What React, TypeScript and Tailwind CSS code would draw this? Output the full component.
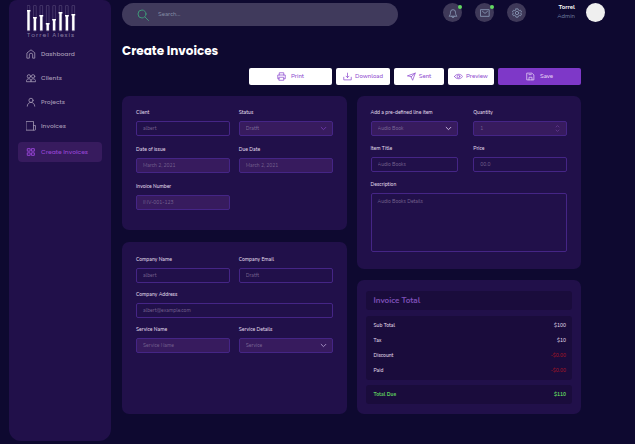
import { useId } from "react";
import type { ReactNode } from "react";

const stroke = {
  fill: "none",
  stroke: "currentColor",
  strokeLinecap: "round" as const,
  strokeLinejoin: "round" as const,
};

function Icon({ className, width = 1.8, children }: { className: string; width?: number; children: ReactNode }) {
  return (
    <svg viewBox="0 0 24 24" className={"shrink-0 " + className} strokeWidth={width} {...stroke} aria-hidden="true">
      {children}
    </svg>
  );
}

const labelText = "block text-[5px] font-medium leading-[8px] text-[#e2dcec]";
const box = "block w-full rounded-[2px] border border-[#452586] px-[6px] text-[5px] text-[#7d6a98] placeholder:text-[#76628f] outline-none";

function Field({ label, placeholder, filled = false, className = "" }: { label: string; placeholder: string; filled?: boolean; className?: string }) {
  const id = useId();
  return (
    <div className={"flex min-w-0 flex-col gap-[4px] " + className}>
      <label htmlFor={id} className={labelText}>{label}</label>
      <input id={id} type="text" placeholder={placeholder} className={box + " h-[15px] " + (filled ? "bg-[#371b5e]" : "bg-transparent")} />
    </div>
  );
}

function SelectField({ label, value, chevron }: { label: string; value: string; chevron: string }) {
  const id = useId();
  return (
    <div className="flex min-w-0 flex-col gap-[4px]">
      <label htmlFor={id} className={labelText}>{label}</label>
      <div className="relative">
        <select id={id} className={box + " h-[15px] appearance-none bg-[#371b5e]"}>
          <option>{value}</option>
        </select>
        <Icon className={"pointer-events-none absolute right-[6px] top-[4px] size-[7px] " + chevron} width={3.4}>
          <path d="M4 8l8 8 8-8" />
        </Icon>
      </div>
    </div>
  );
}

const bars = [5, 12, 10, 18, 14, 7, 10, 9];

function Logo() {
  return (
    <div className="ml-[9px] w-[50px]">
      <svg viewBox="0 0 50 27" className="block h-[27px] w-[50px]" aria-hidden="true">
        {bars.map((top, i) => {
          const x = 1.5 + i * 6.4;
          return (
            <g key={i}>
              <rect x={x - 1.3} y={0.4} width={2.6} height={25.6} rx={0.5} fill="none" stroke="#8d83a6" strokeOpacity={0.55} strokeWidth={0.6} />
              <rect x={x - 1.2} y={top} width={2.4} height={25.5 - top} fill="#fff" />
              <rect x={x - 1.9} y={top} width={3.8} height={1.5} fill="#fff" />
            </g>
          );
        })}
      </svg>
      <p className="whitespace-nowrap font-['Poppins','Inter',sans-serif] text-[6px] leading-[6px] tracking-[1px] text-[#877da0]">Torrel Alexis</p>
    </div>
  );
}

const navItems: { label: string; icon: ReactNode }[] = [
  { label: "Dashboard", icon: <path d="M3 9l9-7 9 7v13h-5v-8a4 4 0 0 0-8 0v8H3z" /> },
  {
    label: "Clients",
    icon: (
      <>
        <circle cx="7" cy="8" r="4" />
        <circle cx="17" cy="8" r="4" />
        <path d="M1 20c0-4 2-6 6-6s5 2 5 6zM12 20c0-4 1-6 5-6s6 2 6 6z" />
      </>
    ),
  },
  {
    label: "Projects",
    icon: (
      <>
        <circle cx="12" cy="8" r="5" />
        <path d="M3 22c0-5 4-9 9-9s9 4 9 9" />
      </>
    ),
  },
  { label: "Invoices", icon: <path d="M1 1h17v21H1zM18 11h5v9a2 2 0 0 1-2 2h-3" /> },
];

function Sidebar() {
  return (
    <aside className="flex w-[102px] shrink-0 flex-col rounded-b-[12px] rounded-t-[8px] bg-[#21104a] px-[9px] pt-[5px]">
      <Logo />
      <nav className="mt-[6px] flex flex-col gap-[4px] font-['Poppins','Inter',sans-serif] text-[6px] font-medium text-[#a196b2]">
        {navItems.map((item) => (
          <a key={item.label} href="#" className="flex h-[20px] items-center gap-[5px] pl-[8px]">
            <Icon className="size-[10px]" width={2}>{item.icon}</Icon>
            {item.label}
          </a>
        ))}
        <a href="#" aria-current="page" className="mt-[2px] flex h-[20px] items-center gap-[5px] rounded-[4px] bg-[#371b5e] pl-[8px] text-[#9243cf]">
          <Icon className="size-[10px]" width={2.4}>
            <path d="M4 4h6v6H4zM14 4h6v6h-6zM4 14h6v6H4zM14 14h6v6h-6z" />
          </Icon>
          Create Invoices
        </a>
      </nav>
    </aside>
  );
}

function RoundButton({ label, dot = false, children }: { label: string; dot?: boolean; children: ReactNode }) {
  return (
    <button type="button" aria-label={label} className="relative flex size-[19px] items-center justify-center rounded-full bg-[#3f3959] text-[#8c9bb8]">
      <Icon className="size-[10px]" width={2}>{children}</Icon>
      {dot && <span className="absolute right-0 top-[2px] size-[4px] rounded-full bg-[#62d862]" />}
    </button>
  );
}

function Header() {
  return (
    <header className="flex items-start pt-[3px]">
      <div className="flex h-[23px] flex-1 items-center gap-[9px] rounded-full bg-[#403a5c] pl-[15px]">
        <Icon className="size-[12px] text-[#3f9678]" width={2}>
          <circle cx="10" cy="10" r="8" />
          <path d="M16 16l7 7" />
        </Icon>
        <input type="search" aria-label="Search" placeholder="Search..." className="min-w-0 flex-1 bg-transparent text-[6px] text-[#8f98ae] outline-none placeholder:text-[#8790a8]" />
      </div>
      <div className="ml-[45px] flex gap-[13px]">
        <RoundButton label="Notifications" dot>
          <path d="M3 19c2-2 3-4 3-9a6 6 0 0 1 12 0c0 5 1 7 3 9zM9 20a3 3 0 0 0 6 0" />
        </RoundButton>
        <RoundButton label="Messages" dot>
          <path d="M2 4h20v16H2zM6 8l6 5 6-5" />
        </RoundButton>
        <RoundButton label="Settings">
          <path d="M9.5 2h5l.8 3 2.2 1.2 3-.8 2.4 4.2-2.2 2.2v.4l2.2 2.2-2.4 4.2-3-.8-2.2 1.2-.8 3h-5l-.8-3-2.2-1.2-3 .8-2.4-4.2 2.2-2.2v-.4L1.1 9.6l2.4-4.2 3 .8L8.7 5z" />
          <circle cx="12" cy="12" r="4" />
        </RoundButton>
      </div>
      <div className="ml-[27px] w-[22px] whitespace-nowrap">
        <p className="flex justify-end text-[6px] font-bold leading-[9px] text-white">Torrel</p>
        <p className="flex justify-end text-[6px] leading-[9px] text-[#7180a3]">Admin</p>
      </div>
      <div className="ml-[11px] size-[19px] rounded-full bg-[#efefef]" />
    </header>
  );
}

function ActionButton({ label, className, gap = "gap-[3px]", children }: { label: string; className: string; gap?: string; children: ReactNode }) {
  return (
    <button type="button" className={"flex h-[17px] items-center justify-center rounded-[2px] text-[6px] font-medium " + gap + " " + className}>
      <Icon className="size-[9px]" width={2}>{children}</Icon>
      {label}
    </button>
  );
}

function Actions() {
  const light = "bg-white text-[#8f4dd0] ";
  return (
    <div className="mt-[9px] flex justify-end gap-[4px]">
      <ActionButton label="Print" className={light + "w-[83px]"} gap="gap-[5px]">
        <path d="M6 8V2h12v6M6 18H2V8h20v10h-4M6 14h12v8H6z" />
      </ActionButton>
      <ActionButton label="Download" className={light + "w-[54px]"}>
        <path d="M12 3v12M8 11l4 4 4-4M2 14v7h20v-7" />
      </ActionButton>
      <ActionButton label="Sent" className={light + "w-[50px]"}>
        <path d="M2 10L22 3l-7 19-4-9zM11 13L22 3" />
      </ActionButton>
      <ActionButton label="Preview" className={light + "w-[46px]"}>
        <path d="M1 12c5-8 17-8 22 0-5 8-17 8-22 0z" />
        <circle cx="12" cy="12" r="3.5" />
      </ActionButton>
      <ActionButton label="Save" className="w-[83px] bg-[#7e38c8] text-[#e6d6f5]" gap="gap-[5px]">
        <path d="M3 3h13l5 5v13H3zM8 21v-7h8v7M8 7h6" />
      </ActionButton>
    </div>
  );
}

const card = "rounded-[7px] bg-[#21104a]";
const rows = [
  { name: "Sub Total", amount: "$100", tone: "text-[#e2dcec]" },
  { name: "Tax", amount: "$10", tone: "text-[#e2dcec]" },
  { name: "Discount", amount: "-$0.00", tone: "text-[#a81524]" },
  { name: "Paid", amount: "-$0.00", tone: "text-[#a81524]" },
];

function InvoiceTotal() {
  return (
    <section className={card + " px-[9px] pb-[10px] pt-[11px] text-[5px] font-medium"}>
      <h2 className="flex h-[19px] items-center rounded-[3px] bg-[#1a0c3c] px-[8px] text-[8px] font-bold text-[#7d4fb8]">Invoice Total</h2>
      <div className="mt-[6px] rounded-[3px] bg-[#1a0c3c] py-[2px] pl-[8px] pr-[6px]">
        <table className="w-full">
          <tbody>
            {rows.map((row) => (
              <tr key={row.name} className="h-[15px]">
                <th scope="row" className="p-0 text-left align-middle font-medium leading-[8px] text-[#e2dcec]">{row.name}</th>
                <td className={"p-0 text-right align-middle leading-[8px] " + row.tone}>{row.amount}</td>
              </tr>
            ))}
          </tbody>
        </table>
      </div>
      <p className="mt-[5px] flex h-[19px] items-center justify-between rounded-[3px] bg-[#1a0c3c] pl-[8px] pr-[6px] font-bold text-[#5fce5f]">
        <span>Total Due</span>
        <span>$110</span>
      </p>
    </section>
  );
}

export default function App() {
  const descriptionId = useId();
  const quantityId = useId();
  return (
    <div className="flex min-h-screen bg-[#0e0930] pb-[3px] pl-[9px] font-['Nunito','Lato',sans-serif]">
      <Sidebar />
      <main className="min-w-0 flex-1 pl-[11px] pr-[30px]">
        <Header />
        <div className="pr-[24px]">
          <h1 className="mt-[16px] font-['Poppins','Inter',sans-serif] text-[12px] font-bold leading-[17px] text-white">Create Invoices</h1>
          <Actions />
          <form className="mt-[11px] grid grid-cols-2 gap-[10px]">
            <div className="flex flex-col gap-[12px]">
              <section className={card + " grid grid-cols-2 gap-x-[9px] gap-y-[10px] px-[14px] pb-[20px] pt-[13px]"}>
                <Field label="Client" placeholder="albert" />
                <SelectField label="Status" value="Dratft" chevron="text-[#6b38a8]" />
                <Field label="Date of issue" placeholder="March 2, 2021" filled />
                <Field label="Due Date" placeholder="March 2, 2021" filled />
                <Field label="Invoice Number" placeholder="INV-001-123" filled />
              </section>
              <section className={card + " grid flex-1 grid-cols-2 content-start gap-x-[9px] gap-y-[8px] px-[14px] pt-[14px]"}>
                <Field label="Company Name" placeholder="albert" />
                <Field label="Company Email" placeholder="Dratft" />
                <Field label="Company Address" placeholder="albert@example.com" className="col-span-2" />
                <Field label="Service Name" placeholder="Service Name" filled />
                <SelectField label="Service Details" value="Service" chevron="text-[#a48fc0]" />
              </section>
            </div>
            <div className="flex flex-col gap-[11px]">
              <section className={card + " grid grid-cols-[88fr_94fr] gap-x-[15px] gap-y-[9px] px-[14px] pb-[17px] pt-[13px]"}>
                <SelectField label="Add a pre-defined line item" value="Audio Book" chevron="text-[#c5b5da]" />
                <div className="flex min-w-0 flex-col gap-[4px]">
                  <label htmlFor={quantityId} className={labelText}>Quantity</label>
                  <div className="relative">
                    <input id={quantityId} type="text" inputMode="numeric" placeholder="1" className={box + " h-[15px] bg-[#371b5e]"} />
                    <Icon className="pointer-events-none absolute right-[6px] top-[4px] size-[7px] text-[#63398f]" width={3}>
                      <path d="M7 7l5-5 5 5M7 17l5 5 5-5" />
                    </Icon>
                  </div>
                </div>
                <Field label="Item Title" placeholder="Audio Books" />
                <Field label="Price" placeholder="00.0" />
                <div className="col-span-2 flex flex-col gap-[4px]">
                  <label htmlFor={descriptionId} className={labelText}>Description</label>
                  <textarea id={descriptionId} placeholder="Audio Books Details" className={box + " h-[59px] resize-none bg-transparent pt-[4px] leading-[8px]"} />
                </div>
              </section>
              <InvoiceTotal />
            </div>
          </form>
        </div>
      </main>
    </div>
  );
}
